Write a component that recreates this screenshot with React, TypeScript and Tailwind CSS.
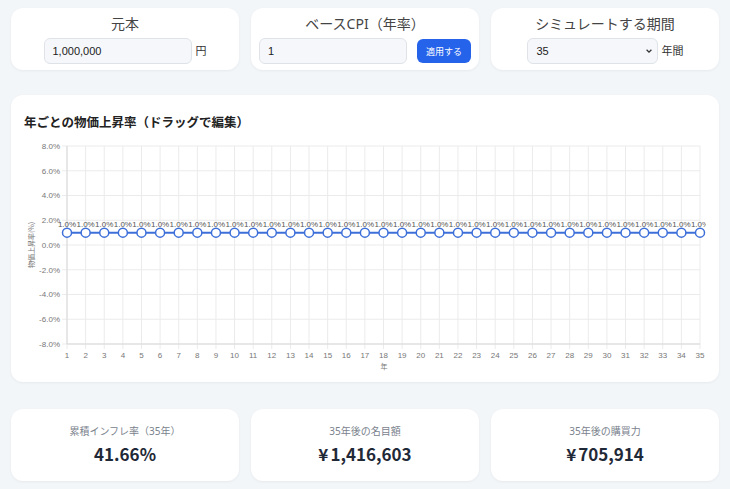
import React from 'react';

const YEARS = Array.from({ length: 35 }, (_, i) => i + 1);
const RATES = YEARS.map(() => 1.0);

const X0 = 67;
const X1 = 700;
const Y_TOP = 146;
const Y_BOTTOM = 344;
const Y_MAX = 8;
const Y_MIN = -8;

const xAt = (i: number) => X0 + ((X1 - X0) * i) / (YEARS.length - 1);
const yAt = (v: number) => Y_TOP + ((Y_MAX - v) / (Y_MAX - Y_MIN)) * (Y_BOTTOM - Y_TOP);

function InflationChart() {
  const ticks = [8, 6, 4, 2, 0, -2, -4, -6, -8];
  const linePoints = RATES.map((r, i) => `${xAt(i)},${yAt(r)}`).join(' ');

  return (
    <svg viewBox="23 135 684 240" width={684} height={240} className="block" style={{ fontFamily: '"Liberation Sans", Arial, sans-serif' }}>
      <defs>
        <clipPath id="plot-clip">
          <rect x={23} y={135} width={683} height={240} />
        </clipPath>
      </defs>
      {/* horizontal grid */}
      {ticks.map((t) => (
        <g key={t}>
          <line x1={62} x2={X1} y1={yAt(t)} y2={yAt(t)} stroke="#ebebeb" strokeWidth={1} />
          <text x={60} y={yAt(t) + 2.8} fontSize={8} fill="#777" textAnchor="end">
            {t.toFixed(1)}%
          </text>
        </g>
      ))}
      {/* vertical grid */}
      {YEARS.map((y, i) => (
        <g key={y}>
          <line x1={xAt(i)} x2={xAt(i)} y1={Y_TOP} y2={Y_BOTTOM + 5} stroke="#ebebeb" strokeWidth={1} />
          <text x={xAt(i)} y={358} fontSize={8} fill="#777" textAnchor="middle">
            {y}
          </text>
        </g>
      ))}
      <line x1={X0} x2={X0} y1={Y_TOP} y2={Y_BOTTOM} stroke="#d9d9d9" strokeWidth={1} />
      <line x1={X0} x2={X1} y1={Y_BOTTOM} y2={Y_BOTTOM} stroke="#d9d9d9" strokeWidth={1} />
      <text x={384} y={369} fontSize={7} fill="#777" textAnchor="middle" fontFamily='"Noto Sans CJK JP", sans-serif'>
        年
      </text>
      <text
        x={0}
        y={0}
        fontSize={7}
        fill="#777"
        textAnchor="middle"
        fontFamily='"Noto Sans CJK JP", sans-serif'
        transform="translate(34 245) rotate(-90)"
      >
        物価上昇率(%)
      </text>
      <g clipPath="url(#plot-clip)">
        <polyline points={linePoints} fill="none" stroke="#3d6fd9" strokeWidth={2} />
        {RATES.map((r, i) => (
          <circle key={i} cx={xAt(i)} cy={yAt(r)} r={4.5} fill="#fff" stroke="#3d6fd9" strokeWidth={1.5} />
        ))}
        {RATES.map((r, i) => (
          <text key={i} x={xAt(i)} y={yAt(r) - 6} fontSize={8} fill="#555" textAnchor="middle">
            {r.toFixed(1)}%
          </text>
        ))}
      </g>
    </svg>
  );
}

function StatCard({ label, value, yen }: { label: string; value: string; yen?: boolean }) {
  return (
    <div className="flex h-[72px] flex-col items-center rounded-xl bg-white pt-[15px] shadow-[0_1px_3px_rgba(0,0,0,0.05)]">
      <div className="text-[10px] leading-[14px] text-[#7a828c]">{label}</div>
      <div
        className="mt-[4px] text-[17px] font-bold leading-[24px] text-[#1f2937]"
        style={{ fontFamily: '"Noto Sans CJK JP", "Noto Sans", sans-serif' }}
      >
        {yen && <span className="mr-[2px]">¥</span>}
        {value}
      </div>
    </div>
  );
}

export default function App() {
  return (
    <div
      className="min-h-[489px] bg-[#f3f6f9] px-[11px] pt-[8px]"
      style={{ fontFamily: '"Noto Sans", "Noto Sans CJK JP", sans-serif' }}
    >
      <div className="grid grid-cols-3 gap-3">
        <div className="flex h-[62px] flex-col items-center rounded-xl bg-white pt-[6px] shadow-[0_1px_3px_rgba(0,0,0,0.05)]">
          <div className="text-[14px] leading-[20px] text-[#444]">元本</div>
          <div className="mt-[4px] flex items-center gap-[4px]">
            <div className="flex h-[26px] w-[148px] items-center rounded-md border border-[#dfe3e8] bg-[#f5f7fa] px-2 text-[11px] text-[#222]" style={{ fontFamily: '"Liberation Sans", Arial, sans-serif' }}>
              1,000,000
            </div>
            <span className="text-[11px] text-[#333]">円</span>
          </div>
        </div>

        <div className="flex h-[62px] flex-col items-center rounded-xl bg-white pt-[6px] shadow-[0_1px_3px_rgba(0,0,0,0.05)]">
          <div className="text-[14px] leading-[20px] text-[#444]">ベースCPI（年率）</div>
          <div className="mt-[4px] flex items-center gap-[10px] self-stretch px-2">
            <div className="flex h-[26px] w-[148px] items-center rounded-md border border-[#dfe3e8] bg-[#f5f7fa] px-2 text-[11px] text-[#222]" style={{ fontFamily: '"Liberation Sans", Arial, sans-serif' }}>
              1
            </div>
            <button type="button" className="h-[24px] w-[54px] rounded-md bg-[#2563eb] text-[9px] leading-none text-white">
              適用する
            </button>
          </div>
        </div>

        <div className="flex h-[62px] flex-col items-center rounded-xl bg-white pt-[6px] shadow-[0_1px_3px_rgba(0,0,0,0.05)]">
          <div className="text-[14px] leading-[20px] text-[#444]">シミュレートする期間</div>
          <div className="mt-[4px] flex items-center gap-[4px]">
            <div className="flex h-[26px] w-[131px] items-center justify-between rounded-md border border-[#dfe3e8] bg-[#f5f7fa] pl-[9px] pr-[4px] text-[11px] text-[#222]" style={{ fontFamily: '"Liberation Sans", Arial, sans-serif' }}>
              <span>35</span>
              <svg width="8" height="8" viewBox="0 0 10 10">
                <path d="M2 3.5 L5 6.5 L8 3.5" fill="none" stroke="#333" strokeWidth="1.6" />
              </svg>
            </div>
            <span className="text-[11px] text-[#333]">年間</span>
          </div>
        </div>
      </div>

      <div className="mt-[25px] h-[287px] rounded-xl bg-white px-3 pt-[19px] shadow-[0_1px_3px_rgba(0,0,0,0.05)]">
        <div className="pl-[1px] text-[12.5px] font-bold leading-[18px] text-[#222]">年ごとの物価上昇率（ドラッグで編集）</div>
        <div className="mt-[3px]">
          <InflationChart />
        </div>
      </div>

      <div className="mt-[27px] grid grid-cols-3 gap-3">
        <StatCard label="累積インフレ率（35年）" value="41.66%" />
        <StatCard label="35年後の名目額" value="1,416,603" yen />
        <StatCard label="35年後の購買力" value="705,914" yen />
      </div>
    </div>
  );
}
